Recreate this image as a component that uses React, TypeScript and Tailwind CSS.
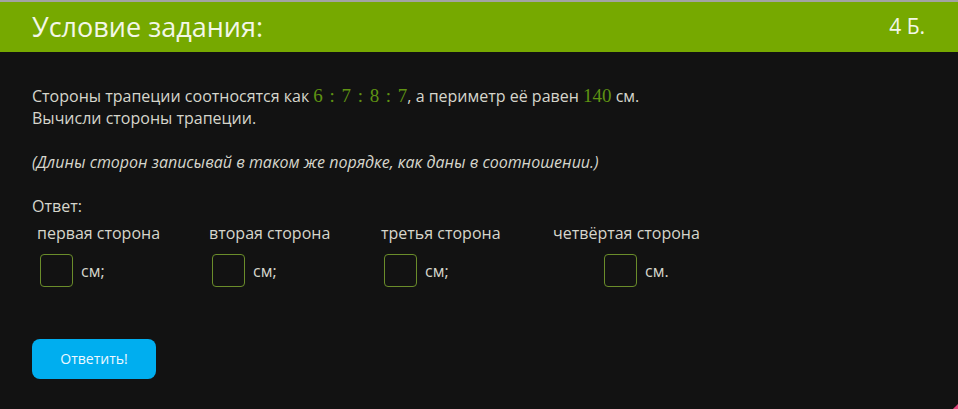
import React from "react";

const sides = [
  { label: "первая сторона", unit: "см;", shift: "ml-[3px]" },
  { label: "вторая сторона", unit: "см;", shift: "ml-[3px]" },
  { label: "третья сторона", unit: "см;", shift: "ml-[3px]" },
  { label: "четвёртая сторона", unit: "см.", shift: "ml-[51px]" },
];

const Num = ({ children }: { children: React.ReactNode }) => (
  <span className="font-['Liberation_Serif',serif] text-[19px] text-[#5f9212]">
    {children}
  </span>
);

const Colon = () => <span className="mx-[6.7px]">:</span>;

export default function App() {
  return (
    <div className="relative w-[958px] h-[409px] overflow-hidden bg-[#121212] font-['Open_Sans',sans-serif] text-[#d6d6cc]">
      <div className="h-[2px] bg-[#a3a3a3]" />
      <div className="flex items-center justify-between h-[50px] bg-[#76a900] pl-[32px] pr-[33px]">
        <h1 className="text-[27px] text-[#f3f7e8]">Условие задания:</h1>
        <span className="text-[21px] text-[#f3f7e8]">4 Б.</span>
      </div>

      <div className="px-[32px] pt-[33px] text-[16px] leading-[22px]">
        <p>
          Стороны трапеции соотносятся как{" "}
          <Num>
            6<Colon />7<Colon />8<Colon />7
          </Num>
          , а периметр её равен <Num>140</Num> см.
        </p>
        <p>Вычисли стороны трапеции.</p>

        <p className="mt-[22px] italic">
          (Длины сторон записывай в таком же порядке, как даны в соотношении.)
        </p>

        <p className="mt-[22px]">Ответ:</p>

        <div className="flex mt-[5px]">
          {sides.map((s) => (
            <div key={s.label} className="w-[172px] pl-[5px]">
              <div>{s.label}</div>
              <div className={`flex items-center gap-[8px] mt-[10px] ${s.shift}`}>
                <div className="w-[33px] h-[33px] rounded-[4px] border border-[#6a8c2a]" />
                <span>{s.unit}</span>
              </div>
            </div>
          ))}
        </div>

        <button className="mt-[52px] w-[124px] h-[40px] rounded-[8px] bg-[#00aeef] text-[14px] text-[#eef9ff]">
          Ответить!
        </button>
      </div>

      <div className="absolute right-[-6px] bottom-[-6px] w-[10px] h-[10px] rotate-45 bg-[#e0457b]" />
    </div>
  );
}
